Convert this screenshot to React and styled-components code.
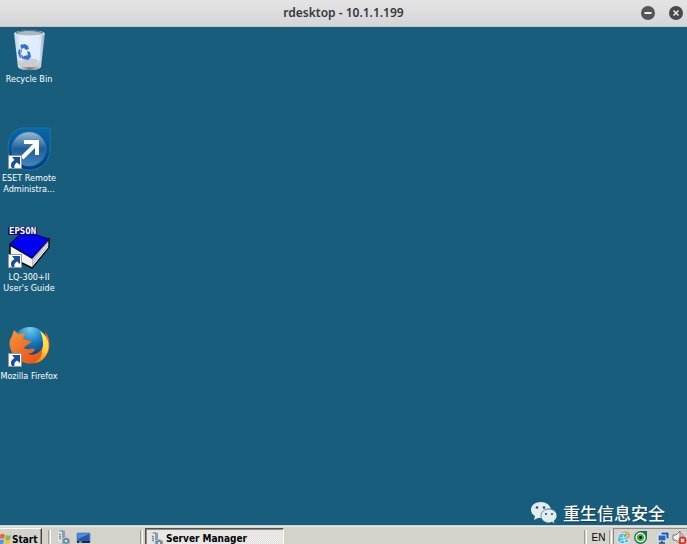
import React from "react";
import styled, { createGlobalStyle } from "styled-components";

const GlobalStyle = createGlobalStyle`
  * { box-sizing: border-box; }
  body { margin: 0; overflow: hidden; }
  button { font: inherit; color: inherit; border: 0; padding: 0; background: none; }
`;

const Window = styled.div`
  display: grid;
  grid-template-rows: 27px minmax(0, 1fr) 19px;
  height: 100vh;
  background: #195d7c;
  font-family: "DejaVu Sans Condensed", "DejaVu Sans", sans-serif;
`;

const TitleBar = styled.header`
  display: grid;
  grid-template-columns: 1fr auto 1fr;
  align-items: center;
  background: linear-gradient(#e4e4e4, #d5d5d5);
  border-bottom: 1px solid #c4c4c4;
`;

const Title = styled.h1`
  grid-column: 2;
  margin: 0;
  font: 600 12px/24px "Noto Sans", "Open Sans", sans-serif;
  color: #36383a;
`;

const WindowControls = styled.div`
  display: flex;
  justify-content: flex-end;
  gap: 14px;
  padding-right: 4px;
`;

const WindowButton = styled.button`
  width: 14px;
  height: 14px;
  border-radius: 50%;
  svg { display: block; }
`;

const Desktop = styled.main`
  display: flex;
  justify-content: space-between;
  min-height: 0;
`;

const Shortcuts = styled.nav`
  display: grid;
  grid-auto-rows: 99px;
  align-content: start;
  width: 58px;
`;

const Shortcut = styled.button`
  display: flex;
  flex-direction: column;
  align-items: center;
  font-size: 9px;
  line-height: 11px;
  color: #fff;
  white-space: nowrap;
  svg { flex: none; display: block; }
`;

const ShortcutLabel = styled.span`
  display: block;
  text-align: center;
`;

const Watermark = styled.div`
  display: flex;
  align-self: flex-end;
  align-items: center;
  gap: 5px;
  padding-right: 22px;
  font: 500 17px/24px "Noto Sans CJK SC", sans-serif;
  color: #fff;
  text-shadow: 1px 1px 1px #123f56;
`;

const Taskbar = styled.footer`
  display: flex;
  justify-content: space-between;
  overflow: hidden;
  background: #d5d2cc;
  border-top: 1px solid #c8d0d2;
  box-shadow: inset 0 1px #e9e7e3;
  padding-top: 2px;
  color: #000;
`;

const TaskGroup = styled.div`
  display: flex;
  height: 22px;
`;

const StartButton = styled.button`
  display: flex;
  align-items: center;
  gap: 1px;
  width: 42px;
  border-top: 1px solid #fff;
  border-right: 1px solid #45423f;
  box-shadow: inset -1px 0 #96938d;
  font: bold 10px/18px "DejaVu Sans Condensed", "DejaVu Sans", sans-serif;
  svg { flex: none; }
`;

const Grip = styled.span`
  width: 3px;
  margin: 2px ${(p) => p.$after || 2}px 0 ${(p) => p.$before || 2}px;
  border-left: 1px solid #a19e98;
  border-right: 1px solid #fff;
`;

const QuickLaunch = styled.div`
  display: flex;
  gap: 5px;
  width: 82px;
  padding-top: 2px;
`;

const IconButton = styled.button`
  width: 15px;
  height: 15px;
  svg { display: block; }
`;

const TaskButton = styled.button`
  display: flex;
  align-items: center;
  gap: 2px;
  width: 139px;
  padding-left: 3px;
  border: 1px solid #55524e;
  border-right-color: #fff;
  box-shadow: inset 1px 1px #8d8a85;
  background: repeating-conic-gradient(#efeeec 0 25%, #e2e0dc 0 50%) 0 0 / 2px 2px;
  font: bold 10px/18px "DejaVu Sans Condensed", "DejaVu Sans", sans-serif;
`;

const Language = styled.button`
  width: 19px;
  height: 20px;
  font: 10px/20px "Liberation Sans", sans-serif;
`;

const Tray = styled.div`
  display: flex;
  gap: 2px;
  padding: 1px 0 0 2px;
  width: 74px;
  border-top: 1px solid #8d8a85;
  border-left: 1px solid #8d8a85;
  ${IconButton} { flex: none; }
  ${IconButton}:nth-child(3) { margin-left: 6px; }
  ${IconButton}:nth-child(4) { margin-left: -1px; }
`;

const Arrow = () => (
  <g>
    <path d="M1.5 29.5h13v13h-13z" fill="#fff" stroke="#8b9aa5" />
    <path d="M5 31h8v8l-3-2.5C7.500 38 7 39.500 7.500 42H5c-2-3-1-6 2.500-8z" fill="#174f98" />
  </g>
);

const BinIcon = () => (
  <svg width="44" height="47" viewBox="0 0 44 47">
    <defs>
      <linearGradient id="bin"><stop stopColor="#c0d6e4" /><stop offset=".3" stopColor="#e6f2ff" /><stop offset=".8" stopColor="#ddeaff" /><stop offset="1" stopColor="#88a6bc" /></linearGradient>
      <linearGradient id="foot"><stop stopColor="#e8e8e8" /><stop offset=".5" stopColor="#777" /><stop offset="1" stopColor="#d8d8d8" /></linearGradient>
    </defs>
    <path d="M7 6h31l-4 34c-4 4-19 4-23 0z" fill="url(#bin)" />
    <path d="M11 35c5-5 18-5 23 0l-1 5c-4 4-17 4-21 0z" fill="#c9ccd0" />
    <path d="M11 38c6 3 17 3 23 0l-1 3c-4 3-17 3-21 0z" fill="url(#foot)" />
    <ellipse cx="22.5" cy="6.5" rx="15" ry="2.5" fill="#a7b9c4" stroke="#edf3f6" />
    <path d="M9 6c5-3 21-3 27 0" fill="none" stroke="#526b7a" />
    <path d="M13 18l5-1 3 2 1 3-3 1-2-2-3 1zM12 22l3 1-1 4 3 3v2l-4-1-2-5zM20 24l3 1 1 5-3 3-4-1v-3l4-1z" fill="#3770d4" />
    <path d="M12 10l3 26M34 9l-3 27" stroke="#fff" strokeOpacity=".5" />
  </svg>
);

const EsetIcon = () => (
  <svg width="44" height="47" viewBox="0 0 44 47">
    <defs>
      <linearGradient id="eset" x2="0" y2="1"><stop stopColor="#0868a8" /><stop offset="1" stopColor="#063d7d" /></linearGradient>
      <linearGradient id="orb" x2="0" y2="1"><stop stopColor="#9dbdd2" /><stop offset=".5" stopColor="#1b5d99" /><stop offset="1" stopColor="#4288bc" /></linearGradient>
    </defs>
    <path d="M15 2h28v21c0 13-9 21-21 21S1 35 1 22C1 11 6 4 15 2z" fill="url(#eset)" stroke="#1977ae" />
    <circle cx="22" cy="23" r="17" fill="url(#orb)" stroke="#4d7daa" strokeWidth=".6" />
    <path d="M15 32l15-15M17 16h13v13" fill="none" stroke="#fff" strokeWidth="4" />
    <Arrow />
  </svg>
);

const BookIcon = () => (
  <svg width="44" height="47" viewBox="0 0 44 47">
    <path d="M3 20l22 13 17-19v8L25 43 3 32z" fill="#f2f2f2" stroke="#08080e" strokeWidth="1.5" />
    <path d="M25 33v9l16-20v-7z" fill="#b8b8b8" />
    <path d="M26 37l15-18M26 40l15-18" stroke="#f7f7f7" />
    <path d="M3 19L17 6l25 8-17 19z" fill="#0000f2" stroke="#07076d" strokeWidth="1.3" />
    <path d="M1 2h29v8H1z" fill="#10106f" />
    <text x="2" y="9" fill="#fff" fontFamily="DejaVu Sans Mono" fontSize="9" fontWeight="bold">EPSON</text>
    <Arrow />
  </svg>
);

const FirefoxIcon = () => (
  <svg width="44" height="47" viewBox="0 0 44 47">
    <defs>
      <radialGradient id="globe" cx=".5" cy=".05" r=".8"><stop stopColor="#76cced" /><stop offset=".5" stopColor="#147cbe" /><stop offset="1" stopColor="#073470" /></radialGradient>
      <linearGradient id="fox" x2="1" y2="1"><stop stopColor="#f39a3e" /><stop offset=".5" stopColor="#f06a22" /><stop offset="1" stopColor="#e34d16" /></linearGradient>
      <linearGradient id="tail" x2="0" y2="1"><stop stopColor="#ffe866" /><stop offset=".6" stopColor="#ffd33a" /><stop offset="1" stopColor="#f17a18" /></linearGradient>
    </defs>
    <circle cx="23" cy="21" r="18" fill="url(#globe)" />
    <path d="M5 12l2-6 4 4 7-1-2 6 8 2c1 3-5 3-7 7 4 3 8-1 11 1-1 4-4 4-7 5 7 2 12-1 15-8 3-5 3-9 2-14 6 6 6 19 0 25-8 10-25 8-31-2-5-7-6-13-2-19z" fill="url(#fox)" />
    <path d="M33 7c10 6 11 18 5 26-3 4-7 6-11 6 7-4 8-8 8-12 2-6 1-14-2-20z" fill="url(#tail)" />
    <Arrow />
  </svg>
);

const ServerIcon = () => (
  <svg width="15" height="15" viewBox="0 0 15 15">
    <path d="M2 1l4-1 3 1v12l-3 1-4-2z" fill="#8c9ea8" />
    <path d="M2 1l4 1v12l-4-2z" fill="#dce5ea" />
    <path d="M3 4l2 1M3 6l2 1M3 8l2 1" stroke="#4b7185" />
    <path d="M6 9l4-2 4 2v5H6z" fill="#8197a5" stroke="#c6d0d6" strokeWidth=".7" />
    <circle cx="10" cy="11" r="2" fill="#dde7ee" stroke="#526c7c" />
  </svg>
);

const ScreenIcon = () => (
  <svg width="15" height="15" viewBox="0 0 15 15">
    <path d="M1 3h13v9H1z" fill="#2459b2" stroke="#7898bc" />
    <path d="M2 4h11L2 9z" fill="#4c8be0" />
    <path d="M1 11h13v2H1z" fill="#1b2b48" />
    <path d="M3 12h3" stroke="#ddd" />
  </svg>
);

const FlagIcon = () => (
  <svg width="11" height="14" viewBox="0 0 11 14">
    <path d="M0 2c2-2 3-1 5 0L4 6C2 5 1 5 0 6z" fill="#e8693c" />
    <path d="M6 2c2 1 3 1 5 0l-1 5c-2 1-3 1-5-1z" fill="#86bb50" />
    <path d="M0 7c2-1 3 0 4 0l-1 5c-1-1-2-1-3-1z" fill="#4e9ade" />
    <path d="M5 7c2 1 3 1 5 1l-1 4c-2 1-4 0-5-1z" fill="#f7bf35" />
  </svg>
);

const UpdateIcon = () => (
  <svg width="15" height="15" viewBox="0 0 15 15">
    <path d="M3 4l8-1 2 9-7 2-5-3z" fill="#4eb9cf" stroke="#d5eff4" />
    <path d="M4 8l7-1M4 11l8-2M7 5l2 8" stroke="#c9eef4" />
    <path d="M5 4c2-3 6-3 8-1 3 3-1 6-4 6 3-2 4-4 2-5-2-2-4-1-6 0z" fill="#ed9a42" />
  </svg>
);

const EyeIcon = () => (
  <svg width="15" height="15" viewBox="0 0 15 15">
    <path d="M7 1h7v7a6.5 6.5 0 1 1-7-7z" fill="#107a4c" />
    <circle cx="7.5" cy="7.5" r="5" fill="#fff" />
    <circle cx="7.5" cy="7.5" r="3.6" fill="#48a837" />
    <circle cx="7.5" cy="7.5" r="1.4" fill="#111" />
  </svg>
);

const NetworkIcon = () => (
  <svg width="15" height="15" viewBox="0 0 15 15">
    <path d="M5 2h8v7H5z" fill="#1c59a9" stroke="#d9e5ef" />
    <path d="M2 5h8v6H2z" fill="#2267bb" stroke="#e4edf4" />
    <path d="M3 13h6M6 11v2" stroke="#27486a" strokeWidth="1.5" />
  </svg>
);

const VolumeIcon = () => (
  <svg width="15" height="15" viewBox="0 0 15 15">
    <path d="M1 5h3l4-4v13l-4-4H1z" fill="#f1f1f1" stroke="#777" />
    <path d="M9 3c3 2 3 6 1 9" fill="none" stroke="#888" />
    <circle cx="10.5" cy="10.5" r="4" fill="#df3630" />
    <path d="M9 9l3 3m0-3l-3 3" stroke="#fff" strokeWidth="1.3" />
  </svg>
);

const WeChatIcon = () => (
  <svg width="27" height="24" viewBox="0 0 27 24">
    <path d="M10 1C4 1 0 4 0 9c0 3 2 5 4 6l-1 4 4-2h4c-1-6 3-10 9-9-1-4-5-7-10-7z" fill="#e3ecef" />
    <path d="M18 8c-5 0-8 3-8 7s4 7 8 7l3-1 3 2-1-3c6-5 2-12-5-12z" fill="#e3ecef" stroke="#195d7c" strokeWidth=".6" />
    <g fill="#195d7c"><circle cx="6" cy="6.5" r="1.3" /><circle cx="13" cy="6.5" r="1.3" /><circle cx="15" cy="13" r="1.1" /><circle cx="21" cy="13" r="1.1" /></g>
  </svg>
);

const shortcuts = [
  { Icon: BinIcon, lines: ["Recycle Bin"] },
  { Icon: EsetIcon, lines: ["ESET Remote", "Administra..."] },
  { Icon: BookIcon, lines: ["LQ-300+II", "User's Guide"] },
  { Icon: FirefoxIcon, lines: ["Mozilla Firefox"] },
];

export default function App() {
  return (
    <Window>
      <GlobalStyle />
      <TitleBar>
        <Title>rdesktop - 10.1.1.199</Title>
        <WindowControls>
          <WindowButton aria-label="Minimize">
            <svg width="14" height="14" viewBox="0 0 14 14"><circle cx="7" cy="7" r="7" fill="#555" /><path d="M3.5 7h7" stroke="#eee" strokeWidth="2" /></svg>
          </WindowButton>
          <WindowButton aria-label="Close">
            <svg width="14" height="14" viewBox="0 0 14 14"><circle cx="7" cy="7" r="7" fill="#484848" /><path d="M4.5 4.5l5 5m0-5l-5 5" stroke="#eee" strokeWidth="1.5" /></svg>
          </WindowButton>
        </WindowControls>
      </TitleBar>
      <Desktop>
        <Shortcuts aria-label="Desktop shortcuts">
          {shortcuts.map(({ Icon, lines }) => (
            <Shortcut key={lines[0]}>
              <Icon />
              <span>{lines.map((line) => <ShortcutLabel key={line}>{line}</ShortcutLabel>)}</span>
            </Shortcut>
          ))}
        </Shortcuts>
        <Watermark><WeChatIcon /><span>重生信息安全</span></Watermark>
      </Desktop>
      <Taskbar>
        <TaskGroup>
          <StartButton><FlagIcon />Start</StartButton>
          <Grip $before={6} $after={5} />
          <QuickLaunch>
            <IconButton aria-label="Server Manager"><ServerIcon /></IconButton>
            <IconButton aria-label="Show desktop"><ScreenIcon /></IconButton>
          </QuickLaunch>
          <Grip />
          <TaskButton><ServerIcon />Server Manager</TaskButton>
        </TaskGroup>
        <TaskGroup>
          <Grip />
          <Language>EN</Language>
          <Grip $before={1} $after={1} />
          <Tray>
            <IconButton aria-label="Updates"><UpdateIcon /></IconButton>
            <IconButton aria-label="ESET"><EyeIcon /></IconButton>
            <IconButton aria-label="Network"><NetworkIcon /></IconButton>
            <IconButton aria-label="Muted"><VolumeIcon /></IconButton>
          </Tray>
        </TaskGroup>
      </Taskbar>
    </Window>
  );
}
